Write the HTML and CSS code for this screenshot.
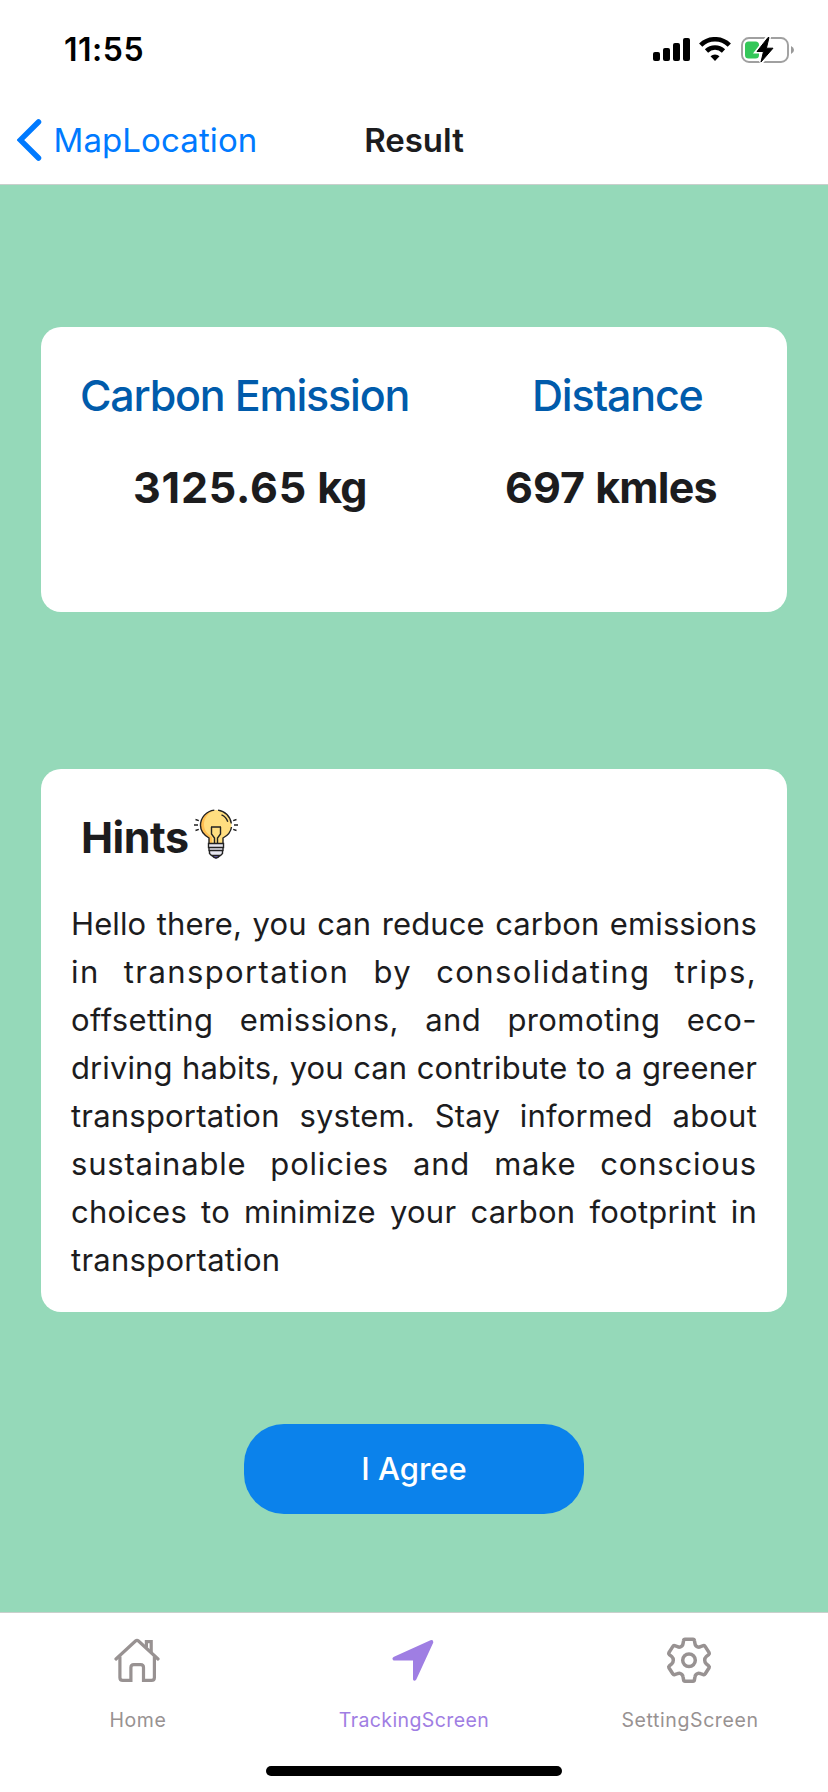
FILE: index.html
```html
<!DOCTYPE html>
<html lang="en">
<head>
<meta charset="utf-8">
<title>Result</title>
<link rel="stylesheet" href="styles.css">
</head>
<body>
<div class="screen">
  <div class="status">
    <span class="time">11:55</span>
    <div class="status-icons">
      <svg width="37" height="26" viewBox="0 0 37 26"><rect x="0" y="15" width="7" height="9" rx="2"/><rect x="10" y="11" width="7" height="13" rx="2"/><rect x="20" y="6" width="7" height="18" rx="2"/><rect x="30" y="1" width="7" height="23" rx="2"/></svg>
      <svg class="wifi" width="32" height="26" viewBox="0 0 32 26"><path d="M1.700 8.100a20.400 20.400 0 0 1 28.600 0M7.500 14a12.100 12.100 0 0 1 17 0" fill="none" stroke="#000" stroke-width="4.600"/><path d="M16 24l-4.500-4.700a6.400 6.400 0 0 1 9 0z"/></svg>
      <svg class="battery" width="54" height="28" viewBox="0 0 54 28"><rect x="1" y="2" width="46" height="24" rx="7" fill="none" stroke="#a0a0a0" stroke-width="1.900"/><path d="M50 10v8q3-1.400 3-4t-3-4z" fill="#999"/><rect x="4" y="5.500" width="14" height="17" rx="3.500" fill="#34c759"/><path d="M27 1L16 15.500h6.500L20 26.500 32.500 12h-7L28 1z" fill="#fff" stroke="#fff" stroke-width="4"/><path d="M27 1.500L16 15.500h6.500L20 26 32 12.200h-6.600L28 1.500z" stroke="#000" stroke-width="1" stroke-linejoin="round"/></svg>
    </div>
  </div>
  <header class="nav">
    <a class="back"><svg width="25" height="42" viewBox="0 0 25 42"><path d="M21.500 3L3.300 21l18.200 18" fill="none" stroke="#007aff" stroke-width="5.500" stroke-linecap="round" stroke-linejoin="miter"/></svg><span>MapLocation</span></a>
    <h1 class="title">Result</h1>
  </header>
  <main class="content">
    <section class="card summary">
      <div class="labels"><span class="l-carbon">Carbon Emission</span><span class="l-distance">Distance</span></div>
      <div class="values"><span class="v-carbon"><span class="num">3125.65</span> <span class="unit">kg</span></span><span class="v-distance">697 <span class="unit">kmles</span></span></div>
    </section>
    <section class="card hints">
      <div class="hints-head"><h2>Hints</h2>
        <svg class="bulb" width="44" height="51" viewBox="0 0 44 51"><path d="M15 34v-5C10 26 6.500 22 6.500 16.500a15.500 15.500 0 0 1 31 0C37.500 22 34 26 29 29v5z" fill="#ffde80"/><path d="M20 1.200a15.500 15.500 0 0 0-13.500 15.500C6.500 22 10 26 15 29v5h3v-6C12 24 10 20 10 15.500 10 9 14 4 20 1.200z" fill="#ffbf52"/><path d="M15 34v-5C10 26 6.500 22 6.500 16.500A15.400 15.400 0 0 1 20.300 1.100M24 1.100a15.400 15.400 0 0 1 13.300 13.400M37.500 18c-.6 5-3.700 8.500-8.500 11v5" fill="none" stroke="#222" stroke-width="1.400"/><path d="M17 18h10M17.500 18v7l3 4v5M26.500 18v7l-3 4v5M27.500 5.800q4.800 2 6.300 7" fill="none" stroke="#222" stroke-width="1.400"/><path d="M15.500 34.500h13v9l-2 2.500h-9l-2-2.500z" fill="#e7e6ef"/><path d="M18.500 46.500h7L22 50z" fill="#7567c7"/><path d="M14.500 34.500h15v4h-15zM15 38.500v3h14v-3M15.500 41.500v3l2 2h9l2-2v-3M18 46.500q4 5 8 0" fill="none" stroke="#222" stroke-width="1.400"/><path d="M0 16h4M1.500 10.500l3.300 1.200M1.500 21.500l3.300-1.200M40 16h4M42.500 10.500l-3.300 1.200M42.500 21.500l-3.300-1.200" stroke="#222" stroke-width="1.400"/></svg>
      </div>
      <p class="tip">
        <span class="line l1">Hello there, you can reduce carbon emissions</span>
        <span class="line l2">in transportation by consolidating trips,</span>
        <span class="line l3">offsetting emissions, and promoting eco-</span>
        <span class="line l4">driving habits, you can contribute to a greener</span>
        <span class="line l5">transportation system. Stay informed about</span>
        <span class="line l6">sustainable policies and make conscious</span>
        <span class="line l7">choices to minimize your carbon footprint in</span>
        <span class="line last">transportation</span>
      </p>
    </section>
    <button class="agree">I Agree</button>
  </main>
  <footer class="tabs">
    <a class="tab"><svg width="48" height="48" viewBox="0 0 48 48" fill="none" stroke="currentColor" stroke-width="3.200"><path d="M2 23L21.500 5q1.500-1.300 3 0L44 23" stroke-linecap="round"/><path d="M5.900 20.500V41.500q0 2.900 2.900 2.900h8.100V31.500q0-2.900 2.900-2.900h6.800q2.900 0 2.900 2.900v12.900h8q2.900 0 2.900-2.900V20.500M32.400 11.500V5.600h4.800V16"/></svg><span class="t-home">Home</span></a>
    <a class="tab active"><svg width="48" height="48" viewBox="0 0 48 48" fill="currentColor"><path d="M4 20.800Q1.500 22 3 24Q3.500 24.500 4.500 24.500H23V43.500Q24.200 46 26.300 43.500L43.300 6.500Q43.500 3.500 40.500 4.200z"/></svg><span class="t-track">TrackingScreen</span></a>
    <a class="tab"><svg width="48" height="48" viewBox="0 0 48 48" fill="none" stroke="currentColor" stroke-width="3.500" stroke-linejoin="round"><circle cx="23" cy="24.200" r="6.300"/><path d="M19 3.200h8q1.200 0 1.400 1.300l.6 3.200q.4 2.600 3 3.300 1 .4 2.500-.3l2.800-1q1.200-.4 1.800.7l4 6.200q.6 1.200-.4 2l-2.400 1.900q-1.600 1.500-1.600 3.700t1.600 3.700l2.400 1.900q1 .8.400 2l-4 6.200q-.6 1.100-1.800.7l-2.800-1q-1.500-.7-2.500-.3-2.600.7-3 3.300l-.6 3.200q-.2 1.300-1.400 1.300h-8q-1.200 0-1.400-1.300l-.6-3.200q-.4-2.600-3-3.300-1-.4-2.500.3l-2.800 1q-1.200.4-1.800-.7l-4-6.200q-.6-1.200.4-2l2.400-1.900q1.600-1.500 1.600-3.700T5.700 20.500l-2.400-1.900q-1-.8-.4-2l4-6.200q.6-1.100 1.800-.7l2.800 1q1.500.7 2.500.3 2.600-.7 3-3.300l.6-3.200Q17.800 3.200 19 3.200z"/></svg><span class="t-set">SettingScreen</span></a>
    <div class="indicator"></div>
  </footer>
</div>
</body>
</html>
```
FILE: styles.css
```css
* { box-sizing: border-box; }
body { margin: 0; font-family: Inter, "Liberation Sans", sans-serif; color: #1c1c1e; }
svg { display: block; flex: none; }
span, h1, h2 { white-space: nowrap; }
.screen { width: 828px; height: 1792px; display: flex; flex-direction: column; background: #fff; }

.status { height: 96px; padding: 4px 33px 0 64px; display: flex; align-items: center; justify-content: space-between; color: #000; }
.time { font-size: 32px; font-weight: 600; line-height: 40px; letter-spacing: 0.5px; }
.status-icons { display: flex; align-items: center; }
.wifi { margin-left: 9px; }
.battery { margin-left: 10px; }

.nav { height: 89px; border-bottom: 1px solid #c9cfcc; display: grid; grid-template-columns: 1fr auto 1fr; align-items: center; }
.back { display: flex; align-items: center; gap: 11.5px; padding-left: 17px; color: #007aff; font-size: 33px; line-height: 40px; letter-spacing: 0.1px; }
.title { margin: 0; font-size: 33px; line-height: 40px; font-weight: 600; }

.content { flex: 1; background: #95d9b9; padding: 142px 41px 0; display: flex; flex-direction: column; align-items: center; }
.card { width: 746px; background: #fff; border-radius: 20px; }
.summary { height: 285px; padding-top: 42px; font-size: 43px; line-height: 52px; }
.labels { display: flex; padding-left: 39px; color: #005bab; font-weight: 500; letter-spacing: -1.2px; }
.l-carbon { width: 452px; }
.values { display: flex; margin-top: 40px; padding-left: 92px; font-weight: 700; }
.v-carbon { width: 372px; }
.num { letter-spacing: 0.8px; }
.unit { letter-spacing: -0.8px; }

.hints { margin-top: 157px; height: 543px; padding: 0 31px; }
.hints-head { height: 131px; padding: 40px 0 0 9px; display: flex; align-items: flex-start; }
.hints-head h2 { margin: 2px 0 0; font-size: 43px; line-height: 52px; font-weight: 700; width: 113px; letter-spacing: -0.5px; }
.tip { margin: 0 -1px; font-size: 31px; line-height: 48px; }
.line { display: block; text-align: justify; text-align-last: justify; }
.l1, .l4 { letter-spacing: 0.1px; }
.l2 { letter-spacing: 1.4px; }
.l3 { letter-spacing: 0.4px; }
.l5 { letter-spacing: 0.2px; }
.l6 { letter-spacing: 0.8px; }
.l7 { letter-spacing: 0.25px; }
.last { text-align-last: left; letter-spacing: 0.25px; }

.agree { margin-top: 112px; width: 340px; height: 90px; border: 0; border-radius: 40px; background: #0b82eb; color: #fff; font: 500 31px/40px Inter, sans-serif; }

.tabs { position: relative; height: 180px; border-top: 1px solid #c9cfcc; display: grid; grid-template-columns: repeat(3, 1fr); padding-top: 23px; }
.tab { display: flex; flex-direction: column; align-items: center; gap: 24px; color: #989292; font-size: 19.5px; line-height: 24px; }
.t-home { letter-spacing: 0.6px; }
.t-track { letter-spacing: 0.4px; }
.t-set { letter-spacing: 0.6px; }
.active { color: #9f7ee3; }
.indicator { position: absolute; left: 266px; bottom: 16px; width: 296px; height: 10px; border-radius: 5px; background: #000; }
```
